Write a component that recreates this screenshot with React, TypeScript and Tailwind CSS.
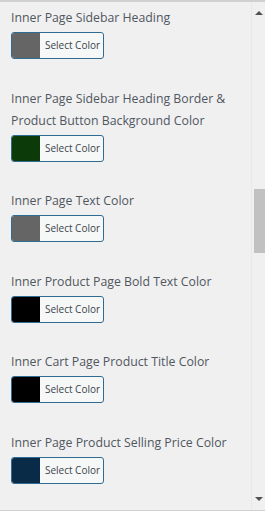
const items = [
  { label: 'Inner Page Sidebar Heading', color: '#656565' },
  { label: 'Inner Page Sidebar Heading Border & Product Button Background Color', color: '#0c3a08' },
  { label: 'Inner Page Text Color', color: '#656565' },
  { label: 'Inner Product Page Bold Text Color', color: '#000000' },
  { label: 'Inner Cart Page Product Title Color', color: '#000000' },
  { label: 'Inner Page Product Selling Price Color', color: '#0a2b48' },
];

function ColorButton({ color }: { color: string }) {
  return (
    <button className="flex h-[27px] w-[93px] overflow-hidden rounded-[3px] border border-[#2f6b93] bg-[#f6f7f7] p-0">
      <span className="h-full w-[28px]" style={{ backgroundColor: color }} />
      <span className="flex h-full flex-1 items-center justify-center pl-[2px] text-[10px] text-[#3c434a]">
        Select Color
      </span>
    </button>
  );
}

export default function App() {
  return (
    <div
      className="flex h-[511px] w-[265px] overflow-hidden border-t-2 border-b border-[#d0d0d0] bg-[#f0f0f1]"
      style={{ fontFamily: '"Open Sans", "Noto Sans", Arial, sans-serif' }}
    >
      <div className="flex flex-1 flex-col gap-[28.5px] pl-[11px] pr-2 pt-[5px]">
        {items.map(item => (
          <div key={item.label} className="flex flex-col">
            <p className="mb-[3px] text-[12.3px] leading-[22px] text-[#50575e]">{item.label}</p>
            <ColorButton color={item.color} />
          </div>
        ))}
      </div>
      <div className="flex w-[14px] flex-col items-center border-l border-[#e8e8e8] bg-[#f0f0f0]">
        <div className="flex h-[16px] w-full items-center justify-center pt-[5px]">
          <div className="h-0 w-0 border-x-[4px] border-b-[4px] border-x-transparent border-b-[#505050]" />
        </div>
        <div className="h-[171px]" />
        <div className="ml-auto h-[64px] w-[11px] bg-[#c1c1c1]" />
        <div className="flex-1" />
        <div className="flex h-[20px] w-full items-center justify-center pb-[2px]">
          <div className="h-0 w-0 border-x-[4px] border-t-[4px] border-x-transparent border-t-[#505050]" />
        </div>
      </div>
    </div>
  );
}
